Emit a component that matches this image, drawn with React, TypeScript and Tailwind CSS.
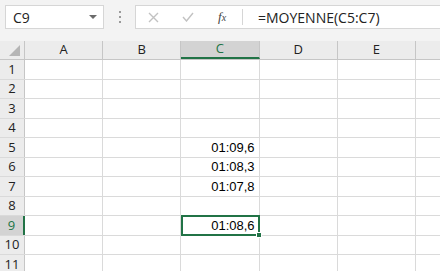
const cols = ['A', 'B', 'C', 'D', 'E'];
const rows = [1, 2, 3, 4, 5, 6, 7, 8, 9, 10, 11];

const values: Record<number, string> = {
  5: '01:09,6',
  6: '01:08,3',
  7: '01:07,8',
  9: '01:08,6',
};

export default function App() {
  return (
    <div className="w-[440px] h-[271px] overflow-hidden bg-[#f3f3f3] font-['Open_Sans',sans-serif] text-[#222]">
      {/* barre de formule */}
      <div className="flex items-center h-[41px] pt-[5px] pb-[12px] pl-[5px]">
        <div className="flex items-center justify-between w-[99px] h-[24px] bg-white border border-[#d6d6d6] pl-[7px] pr-[6px] text-[14px]">
          <span>C9</span>
          <svg width="8" height="5" viewBox="0 0 8 5">
            <path d="M0 0h8L4 4z" fill="#6b6b6b" />
          </svg>
        </div>
        <div className="w-[31px] flex flex-col items-center gap-[3px]">
          <span className="w-[2px] h-[2px] bg-[#9a9a9a]" />
          <span className="w-[2px] h-[2px] bg-[#9a9a9a]" />
          <span className="w-[2px] h-[2px] bg-[#9a9a9a]" />
        </div>
        <div className="flex items-center flex-1 h-[24px] bg-white border border-[#d6d6d6] border-r-0">
          <div className="flex items-center w-[106px] h-full">
            <svg className="ml-[12px]" width="11" height="11" viewBox="0 0 11 11">
              <path d="M1 1l9 9M10 1l-9 9" stroke="#c2c2c2" strokeWidth="1.4" />
            </svg>
            <svg className="ml-[23px]" width="12" height="10" viewBox="0 0 12 10">
              <path d="M1 5l3.5 4L11 1" stroke="#c2c2c2" strokeWidth="1.4" fill="none" />
            </svg>
            <span className="ml-[24px] font-['Liberation_Serif',serif] italic text-[13px] text-[#444]">
              f<span className="text-[10px]">x</span>
            </span>
          </div>
          <div className="w-px h-[16px] bg-[#d6d6d6]" />
          <span className="ml-[15px] text-[14px] text-[#222]">=MOYENNE(C5:C7)</span>
        </div>
      </div>

      {/* grille */}
      <div className="bg-white">
        <div className="flex h-[19px] bg-[#ececec] border-b border-[#c6c6c6]">
          <div className="relative w-[25px] border-r border-[#c6c6c6]">
            <svg className="absolute right-[4px] bottom-[3px]" width="11" height="11" viewBox="0 0 11 11">
              <path d="M11 0v11H0z" fill="#b5b5b5" />
            </svg>
          </div>
          {cols.map((c) => (
            <div
              key={c}
              className={
                c === 'C'
                  ? 'w-[78.2px] shrink-0 flex items-center justify-center text-[13px] bg-[#d3d3d3] text-[#217346] border-r border-[#c6c6c6] border-b-2 border-b-[#217346]'
                  : 'w-[78.2px] shrink-0 flex items-center justify-center text-[13px] border-r border-[#c6c6c6]'
              }
            >
              {c}
            </div>
          ))}
          <div className="flex-1" />
        </div>
        {rows.map((r) => (
          <div key={r} className="flex h-[19.5px] border-b border-[#dadada]">
            <div
              className={
                r === 9
                  ? 'w-[25px] shrink-0 flex items-center justify-center text-[13px] bg-[#d3d3d3] text-[#217346] border-r-2 border-[#217346]'
                  : 'w-[25px] shrink-0 flex items-center justify-center text-[13px] bg-[#ececec] border-r border-[#c6c6c6]'
              }
            >
              {r}
            </div>
            {cols.map((c) => (
              <div
                key={c}
                className={
                  c === 'C' && r === 9
                    ? 'relative w-[78.2px] shrink-0 flex items-center justify-end pr-[3px] -mt-px h-[20.5px] border-2 border-[#217346] font-["Liberation_Sans",sans-serif] text-[13px] text-black'
                    : 'w-[78.2px] shrink-0 flex items-center justify-end pr-[4px] border-r border-[#dadada] font-["Liberation_Sans",sans-serif] text-[13px] text-black'
                }
              >
                {c === 'C' ? values[r] : null}
                {c === 'C' && r === 9 && (
                  <span className="absolute right-[-4px] bottom-[-4px] w-[6px] h-[6px] bg-[#217346] border border-white" />
                )}
              </div>
            ))}
            <div className="flex-1" />
          </div>
        ))}
      </div>
    </div>
  );
}
